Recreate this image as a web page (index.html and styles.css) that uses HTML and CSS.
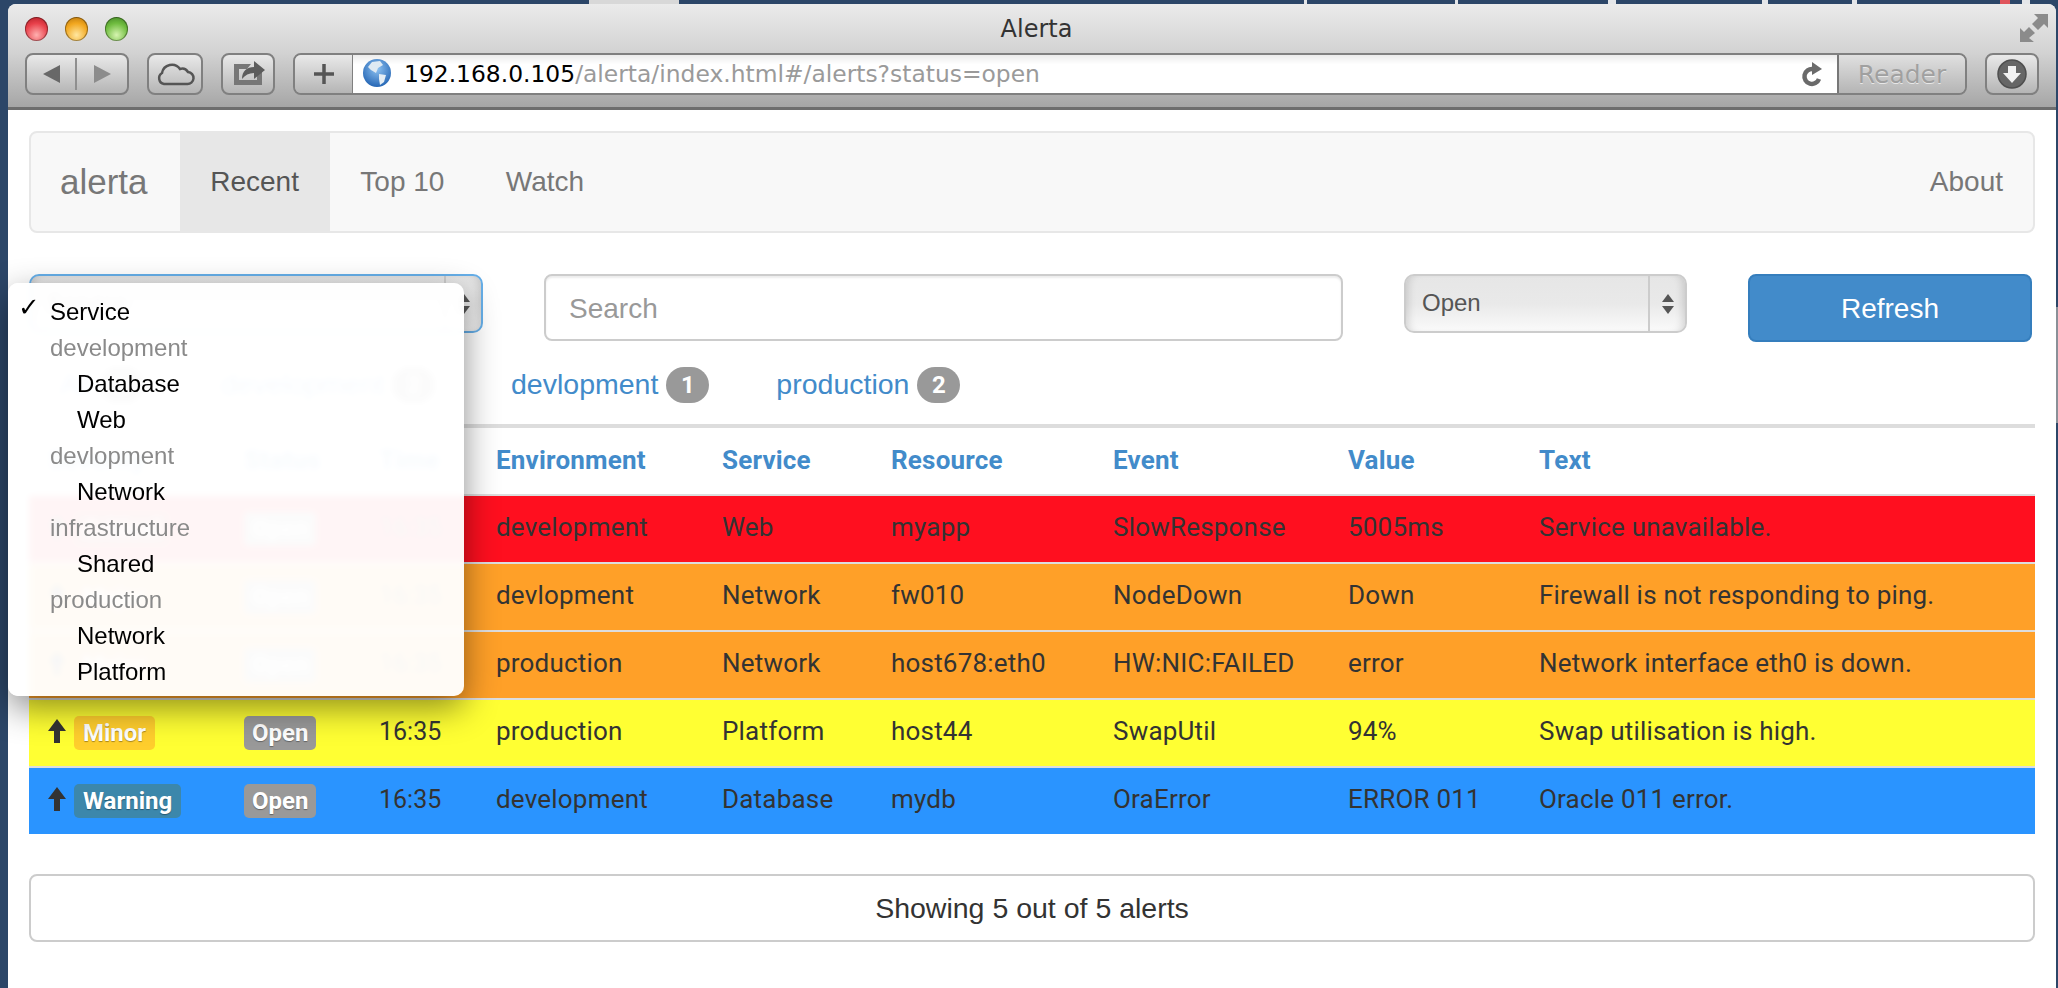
FILE: index.html
```html
<!DOCTYPE html>
<html>
<head>
  <title>Alerta</title>
  <meta name="viewport" content="width=device-width, initial-scale=1.0">
  <link rel="stylesheet" href="styles.css">
</head>
<body>
  <div class="desktop-bits">
    <span class="bit bit-a"></span><span class="bit bit-b"></span><span class="bit bit-c"></span>
    <span class="bit bit-d"></span><span class="bit bit-e"></span><span class="bit bit-f"></span>
    <span class="bit bit-g"></span><span class="bit bit-h"></span><span class="bit bit-i"></span>
  </div>

  <div class="window">
    <div class="chrome">
      <div class="titlebar">
        <div class="lights">
          <span class="light light-red"></span>
          <span class="light light-amber"></span>
          <span class="light light-green"></span>
        </div>
        <div class="window-title">Alerta</div>
        <svg class="fullscreen" width="28" height="28" viewBox="0 0 28 28">
          <path d="M14 0H28V14L24 10L18 16L12 10L18 4Z" fill="#8b8b8b"/>
          <path d="M0 14L4 18L9 13L15 19L9 24L14 28H0Z" fill="#8b8b8b"/>
        </svg>
      </div>

      <div class="toolbar">
        <div class="tool tool-nav">
          <svg width="104" height="42" viewBox="0 0 104 42">
            <path d="M18 21L35 12V30Z" fill="#686868"/>
            <path d="M51 5V37" stroke="#8f8f8f" stroke-width="2"/>
            <path d="M86 21L69 12V30Z" fill="#8c8c8c"/>
          </svg>
        </div>
        <div class="tool tool-cloud">
          <svg width="52" height="38" viewBox="2 2 52 38">
            <path d="M17 31H40a6 6 0 0 0 1-12a7 7 0 0 0-8-3a10 10 0 0 0-18 4a6 6 0 0 0 2 11z" fill="none" stroke="#555" stroke-width="2.5"/>
          </svg>
        </div>
        <div class="tool tool-share">
          <svg width="50" height="38" viewBox="2 2 50 38">
            <path d="M13 11H30L26 16H18V27H36V22L41 18V32H13Z" fill="#777"/>
            <path d="M21 26C21 18 26 14 33 14V8L44 17L33 26V20C28 20 24 22 21 26Z" fill="#5c5c5c"/>
          </svg>
        </div>
        <div class="addressbar">
          <div class="tool-plus">
            <svg width="22" height="22" viewBox="0 0 22 22">
              <path d="M11 1V21M1 11H21" stroke="#555" stroke-width="3.5"/>
            </svg>
          </div>
          <div class="url-field">
            <svg class="globe" width="28" height="28" viewBox="0 0 28 28">
              <defs>
                <radialGradient id="globeFill" cx="50%" cy="35%" r="70%">
                  <stop offset="0" stop-color="#8fc3f2"/>
                  <stop offset="1" stop-color="#1d5fb0"/>
                </radialGradient>
              </defs>
              <circle cx="14" cy="14" r="14" fill="url(#globeFill)"/>
              <path d="M9 3L17 2L20 6L15 9L13 14L8 11L5 8Z" fill="#dfeaf3"/>
              <path d="M16 15L23 16L21 23L17 26L16 20Z" fill="#e4edf4"/>
            </svg>
            <span class="url"><span class="url-host">192.168.0.105</span>/alerta/index.html#/alerts?status=open</span>
            <svg class="reload" width="24" height="26" viewBox="0 0 24 26">
              <path d="M18 18A7.5 7.5 0 1 1 12 8" fill="none" stroke="#6a6a6a" stroke-width="4.5"/>
              <path d="M11 1L21 8L11 14Z" fill="#6a6a6a"/>
            </svg>
          </div>
          <div class="reader">Reader</div>
        </div>
        <div class="tool tool-download">
          <svg width="32" height="32" viewBox="0 0 32 32">
            <circle cx="16" cy="16" r="14" fill="#666" stroke="#4f4f4f" stroke-width="1.5"/>
            <path d="M12 8H20V15H25L16 25L7 15H12Z" fill="#f1f1f1"/>
          </svg>
        </div>
      </div>
    </div>

    <div class="page">
      <nav class="navbar">
        <a class="brand">alerta</a>
        <a class="nav-link active">Recent</a>
        <a class="nav-link">Top 10</a>
        <a class="nav-link">Watch</a>
        <a class="nav-link nav-right">About</a>
      </nav>

      <div class="controls">
        <div class="select select-service">
          <span>Service</span>
          <span class="spinner"><i class="up"></i><i class="down"></i></span>
        </div>
        <div class="search">Search</div>
        <div class="select select-status">
          <span>Open</span>
          <span class="spinner"><i class="up"></i><i class="down"></i></span>
        </div>
        <div class="refresh">Refresh</div>
      </div>

      <ul class="tabs">
        <li class="tab tab-all">All <span class="badge">5</span></li>
        <li class="tab tab-dev">development <span class="badge">2</span></li>
        <li class="tab tab-devl">devlopment <span class="badge">1</span></li>
        <li class="tab tab-prod">production <span class="badge">2</span></li>
      </ul>

      <table class="alerts">
        <colgroup>
          <col class="c-sev"><col class="c-status"><col class="c-time"><col class="c-env"><col class="c-svc">
          <col class="c-res"><col class="c-event"><col class="c-value"><col class="c-text">
        </colgroup>
        <thead>
          <tr>
            <th class="first">Severity</th><th>Status</th><th>Time</th><th>Environment</th><th>Service</th>
            <th>Resource</th><th>Event</th><th>Value</th><th>Text</th>
          </tr>
        </thead>
        <tbody>
          <tr class="critical">
            <td class="first"><div class="sev"><svg class="arrow" width="18" height="24" viewBox="0 0 18 24"><path d="M9 0L18 12H12V24H6V12H0Z"/></svg><span class="label sev-critical">Critical</span></div></td>
            <td><span class="label open">Open</span></td><td class="time">16:35</td><td>development</td><td>Web</td>
            <td>myapp</td><td>SlowResponse</td><td>5005ms</td><td>Service unavailable.</td>
          </tr>
          <tr class="major">
            <td class="first"><div class="sev"><svg class="arrow" width="18" height="24" viewBox="0 0 18 24"><path d="M9 0L18 12H12V24H6V12H0Z"/></svg><span class="label sev-major">Major</span></div></td>
            <td><span class="label open">Open</span></td><td class="time">16:35</td><td>devlopment</td><td>Network</td>
            <td>fw010</td><td>NodeDown</td><td>Down</td><td>Firewall is not responding to ping.</td>
          </tr>
          <tr class="major">
            <td class="first"><div class="sev"><svg class="arrow" width="18" height="24" viewBox="0 0 18 24"><path d="M9 0L18 12H12V24H6V12H0Z"/></svg><span class="label sev-major">Major</span></div></td>
            <td><span class="label open">Open</span></td><td class="time">16:35</td><td>production</td><td>Network</td>
            <td>host678:eth0</td><td>HW:NIC:FAILED</td><td>error</td><td>Network interface eth0 is down.</td>
          </tr>
          <tr class="minor">
            <td class="first"><div class="sev"><svg class="arrow" width="18" height="24" viewBox="0 0 18 24"><path d="M9 0L18 12H12V24H6V12H0Z"/></svg><span class="label sev-minor">Minor</span></div></td>
            <td><span class="label open">Open</span></td><td class="time">16:35</td><td>production</td><td>Platform</td>
            <td>host44</td><td>SwapUtil</td><td>94%</td><td>Swap utilisation is high.</td>
          </tr>
          <tr class="warning">
            <td class="first"><div class="sev"><svg class="arrow" width="18" height="24" viewBox="0 0 18 24"><path d="M9 0L18 12H12V24H6V12H0Z"/></svg><span class="label sev-warning">Warning</span></div></td>
            <td><span class="label open">Open</span></td><td class="time">16:35</td><td>development</td><td>Database</td>
            <td>mydb</td><td>OraError</td><td>ERROR 011</td><td>Oracle 011 error.</td>
          </tr>
        </tbody>
      </table>

      <div class="summary">Showing 5 out of 5 alerts</div>

      <div class="menu">
        <div class="menu-item menu-top"><span class="check">✓</span>Service</div>
        <div class="menu-item menu-group">development</div>
        <div class="menu-item menu-sub">Database</div>
        <div class="menu-item menu-sub">Web</div>
        <div class="menu-item menu-group">devlopment</div>
        <div class="menu-item menu-sub">Network</div>
        <div class="menu-item menu-group">infrastructure</div>
        <div class="menu-item menu-sub">Shared</div>
        <div class="menu-item menu-group">production</div>
        <div class="menu-item menu-sub">Network</div>
        <div class="menu-item menu-sub">Platform</div>
      </div>
    </div>
  </div>
</body>
</html>
```

FILE: styles.css
```css
html, body {
  margin: 0;
  padding: 0;
  height: 100%;
  overflow: hidden;
}
body {
  background: #2c4668;
  font-family: "Liberation Sans", Arial, sans-serif;
}
.desktop-bits {
  position: absolute;
  top: 0;
  left: 0;
  width: 2058px;
  height: 988px;
}
.bit {
  position: absolute;
  background: #e4e6e9;
  top: 0;
  width: 3px;
  height: 4px;
}
.bit-a { left: 589px; width: 90px; background: #d8d8d8; }
.bit-b { left: 1304px; }
.bit-c { left: 1455px; }
.bit-d { left: 1608px; width: 8px; }
.bit-e { left: 1762px; width: 6px; }
.bit-f { left: 1852px; width: 5px; }
.bit-g { left: 2000px; width: 10px; background: #e0555c; }
.bit-h { left: 2022px; width: 8px; }
.bit-i { left: 2056px; top: 307px; width: 2px; height: 116px; background: #8a9098; }

.window {
  position: relative;
  margin: 4px 2px 0 8px;
  height: 984px;
  background: #fff;
  border-radius: 8px 8px 0 0;
}
.chrome {
  height: 103px;
  padding-bottom: 0;
  border-bottom: 3px solid #6e6e6e;
  border-radius: 8px 8px 0 0;
  background: linear-gradient(#ebebeb, #d2d2d2 48%, #a6a6a6);
}
.titlebar {
  display: grid;
  grid-template-columns: 1fr auto 1fr;
  align-items: center;
  height: 49px;
  padding: 0 8px 0 17px;
}
.lights {
  display: flex;
  gap: 17px;
  padding-top: 1px;
}
.light {
  width: 23px;
  height: 24px;
  border-radius: 50%;
  box-shadow: inset 0 0 0 1px rgba(0, 0, 0, .35);
}
.light-red { background: radial-gradient(circle at 50% 75%, #ffb0b0, #e8404a 55%, #a81a22); }
.light-amber { background: radial-gradient(circle at 50% 75%, #ffe7a0, #f2a71f 55%, #b06f0a); }
.light-green { background: radial-gradient(circle at 50% 75%, #d6f4b0, #6fbc3f 55%, #3c7d22); }
.window-title {
  font-family: "DejaVu Sans", sans-serif;
  font-size: 24px;
  color: #333;
}
.fullscreen {
  justify-self: end;
  margin-top: -1px;
}

.toolbar {
  display: flex;
  gap: 18px;
  height: 42px;
  padding: 0 17px;
}
.tool {
  display: flex;
  align-items: center;
  justify-content: center;
  box-sizing: border-box;
  height: 42px;
  border: 2px solid #808080;
  border-radius: 8px;
  background: linear-gradient(#e9e9e9, #b5b5b5);
}
.tool-nav { width: 104px; }
.tool-nav svg { margin: -2px; }
.tool-cloud { width: 56px; }
.tool-share { width: 54px; }
.tool-download { width: 54px; }
.addressbar {
  display: flex;
  flex: 1;
  height: 42px;
  box-sizing: border-box;
  border: 2px solid #808080;
  border-radius: 8px;
  overflow: hidden;
}
.tool-plus {
  display: flex;
  align-items: center;
  justify-content: center;
  width: 57px;
  border-right: 1px solid #808080;
  background: linear-gradient(#e9e9e9, #b5b5b5);
}
.url-field {
  display: flex;
  align-items: center;
  flex: 1;
  padding: 0 12px 0 10px;
  background: linear-gradient(#ececec, #fff 25%);
}
.globe { flex: none; margin-top: -2px; }
.url {
  flex: 1;
  margin-left: 13px;
  font-family: "DejaVu Sans", sans-serif;
  font-size: 23.4px;
  color: #9a9a9a;
  white-space: nowrap;
}
.url-host { color: #000; }
.reader {
  display: flex;
  align-items: center;
  justify-content: center;
  width: 126px;
  border-left: 2px solid #777;
  font-family: "DejaVu Sans", sans-serif;
  font-size: 25px;
  color: #a0a0a0;
  text-shadow: 0 1px 0 #e8e8e8;
  background: linear-gradient(#e0e0e0, #b5b5b5);
}

.page {
  position: relative;
  padding: 21px 21px 0;
  color: #333;
}
.navbar {
  display: flex;
  box-sizing: border-box;
  height: 102px;
  border: 2px solid #e7e7e7;
  border-radius: 8px;
  background: #f8f8f8;
  font-size: 28px;
  color: #777;
}
.brand {
  display: flex;
  align-items: center;
  padding: 0 32px 0 29px;
  font-size: 35px;
}
.nav-link {
  display: flex;
  align-items: center;
  padding: 0 30.7px;
}
.active {
  background: #e7e7e7;
  color: #555;
}
.nav-right {
  margin-left: auto;
  padding-right: 30px;
}

.controls {
  display: flex;
  align-items: flex-start;
  gap: 61px;
  margin-top: 41px;
}
.select {
  position: relative;
  display: flex;
  align-items: center;
  box-sizing: border-box;
  height: 59px;
  padding: 0 16px 2px;
  border: 2px solid #ccc;
  border-radius: 10px;
  font-size: 24px;
  color: #555;
  background: linear-gradient(#e6e6e6, #e9e9e9 50%, #fafafa);
  box-shadow: inset 8px 0 8px -6px rgba(0, 0, 0, .15), inset -8px 0 8px -6px rgba(0, 0, 0, .15);
}
.select-service {
  width: 454px;
  border-color: #66afe9;
}
.select-status { width: 283px; }
.spinner {
  position: absolute;
  top: 0;
  right: 0;
  bottom: 0;
  display: flex;
  flex-direction: column;
  align-items: center;
  justify-content: center;
  gap: 4px;
  width: 35px;
  border-left: 2px solid #ccc;
}
.spinner i {
  width: 0;
  height: 0;
  border-left: 6px solid transparent;
  border-right: 6px solid transparent;
}
.spinner .up { border-bottom: 8px solid #555; }
.spinner .down { border-top: 8px solid #555; }
.search {
  display: flex;
  align-items: center;
  box-sizing: border-box;
  width: 799px;
  height: 67px;
  padding: 2px 23px 0;
  border: 2px solid #ccc;
  border-radius: 8px;
  font-size: 28px;
  color: #999;
  box-shadow: inset 0 2px 2px rgba(0, 0, 0, .08);
}
.refresh {
  display: flex;
  align-items: center;
  justify-content: center;
  box-sizing: border-box;
  width: 284px;
  height: 68px;
  padding-top: 2px;
  border: 2px solid #357ebd;
  border-radius: 8px;
  background: #428bca;
  font-size: 28px;
  color: #fff;
}

.tabs {
  display: flex;
  align-items: center;
  box-sizing: border-box;
  height: 86px;
  margin: 0;
  padding: 3px 0 0;
  border-bottom: 4px solid #ddd;
  list-style: none;
  font-size: 28.5px;
  color: #428bca;
}
.tab {
  display: flex;
  align-items: center;
  gap: 8px;
}
.tab-all { margin-left: 31px; width: 141px; }
.tab-dev { margin-left: 20px; width: 249px; }
.tab-devl { margin-left: 41px; }
.tab-prod { margin-left: 67px; }
.badge {
  display: flex;
  align-items: center;
  justify-content: center;
  min-width: 43px;
  height: 36px;
  border-radius: 18px;
  background: #999;
  font-family: Roboto, sans-serif;
  font-size: 24px;
  font-weight: bold;
  color: #fff;
}

.alerts {
  table-layout: fixed;
  width: 2006px;
  border-collapse: separate;
  border-spacing: 0;
  font-family: Roboto, sans-serif;
  font-size: 26px;
  letter-spacing: .2px;
  color: #333;
}
.c-sev { width: 200px; }
.c-status { width: 135px; }
.c-time { width: 117px; }
.c-env { width: 226px; }
.c-svc { width: 169px; }
.c-res { width: 222px; }
.c-event { width: 235px; }
.c-value { width: 191px; }
.c-text { width: 511px; }
.alerts th {
  height: 66px;
  padding: 0 15px 2px;
  box-sizing: border-box;
  text-align: left;
  font-weight: bold;
  color: #428bca;
}
.alerts td {
  box-sizing: border-box;
  height: 68px;
  padding: 0 15px 4px;
  border-top: 2px solid #ddd;
  white-space: nowrap;
}
.alerts td:nth-child(-n+2) { padding-bottom: 0; }
.alerts .first { padding-left: 19px; padding-right: 0; }
.alerts .time {
  font-size: 25px;
  letter-spacing: 0;
}
.critical td { background: #ff0f1f; }
.major td { background: #ffa028; }
.minor td { background: #ffff33; }
.warning td { background: #2a94ff; }
.sev {
  display: flex;
  align-items: center;
  gap: 8px;
}
.arrow {
  flex: none;
  margin-top: -4px;
  fill: #333;
}
.label {
  display: inline-block;
  height: 34px;
  padding: 0 9px;
  border-radius: 5px;
  font-size: 24px;
  font-weight: bold;
  letter-spacing: 0;
  line-height: 34px;
  color: #fff;
  text-shadow: 0 1px 1px rgba(0, 0, 0, .35);
}
.open { background: #999; padding: 0 8px; }
.sev-critical { background: #c9302c; }
.sev-major { background: #f08a24; }
.sev-minor { background: #ffce2d; }
.sev-warning { background: #3c87ab; }

.summary {
  display: flex;
  align-items: center;
  justify-content: center;
  box-sizing: border-box;
  height: 68px;
  margin-top: 40px;
  border: 2px solid #ccc;
  border-radius: 8px;
  font-size: 28.5px;
  color: #333;
}

.menu {
  position: absolute;
  top: 173px;
  left: 0;
  box-sizing: border-box;
  width: 456px;
  height: 413px;
  padding-top: 11px;
  border-radius: 10px;
  background: rgba(255, 255, 255, .96);
  backdrop-filter: blur(3px);
  box-shadow: 0 12px 34px rgba(0, 0, 0, .45);
  font-size: 24px;
  color: #000;
}
.menu-item {
  position: relative;
  height: 36px;
  line-height: 36px;
  padding-left: 42px;
}
.menu-group { color: #8a8a8a; }
.menu-sub { padding-left: 69px; }
.check {
  position: absolute;
  left: 10px;
  top: -5px;
  font-family: "DejaVu Sans", sans-serif;
  font-size: 26px;
  font-weight: bold;
}
```
